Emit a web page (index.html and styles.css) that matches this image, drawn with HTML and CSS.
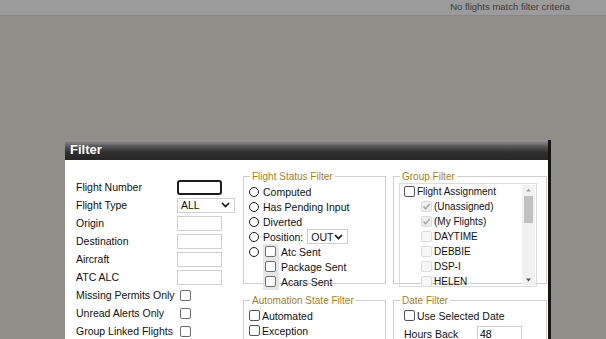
FILE: index.html
```html
<!DOCTYPE html>
<html lang="en">
<head>
    <meta charset="UTF-8">
    <meta name="viewport" content="width=device-width, initial-scale=1.0">
    <title>Flights</title>
    <link rel="stylesheet" href="styles.css">
</head>
<body>

<div class="topbar">
    <span class="status">No flights match filter criteria</span>
</div>

<div class="dialog">
    <div class="dialog-title">Filter</div>
    <div class="dialog-body">

        <div class="criteria">
            <label>Flight Number</label>
            <input type="text" class="txt focused">
            <label>Flight Type</label>
            <div class="fake-select wide"><span>ALL</span><svg width="9" height="6" viewBox="0 0 9 6"><path d="M1 1l3.5 3.5L8 1" fill="none" stroke="#111" stroke-width="1.6"/></svg></div>
            <label>Origin</label>
            <input type="text" class="txt">
            <label>Destination</label>
            <input type="text" class="txt">
            <label>Aircraft</label>
            <input type="text" class="txt">
            <label>ATC ALC</label>
            <input type="text" class="txt">
            <label>Missing Permits Only</label>
            <input type="checkbox" class="cb">
            <label>Unread Alerts Only</label>
            <input type="checkbox" class="cb">
            <label>Group Linked Flights</label>
            <input type="checkbox" class="cb">
        </div>

        <div class="middle">
            <fieldset class="box status-box">
                <legend>Flight Status Filter</legend>
                <div class="row"><input type="radio" name="st" class="rd">Computed</div>
                <div class="row"><input type="radio" name="st" class="rd">Has Pending Input</div>
                <div class="row"><input type="radio" name="st" class="rd">Diverted</div>
                <div class="row"><input type="radio" name="st" class="rd">Position:
                    <div class="fake-select pos"><span>OUT</span><svg width="9" height="6" viewBox="0 0 9 6"><path d="M1 1l3.5 3.5L8 1" fill="none" stroke="#111" stroke-width="1.6"/></svg></div>
                </div>
                <div class="sent">
                    <div class="sent-radio"><input type="radio" name="st" class="rd"></div>
                    <div class="sent-checks">
                        <div class="row"><input type="checkbox" class="cb"></div>
                        <div class="row"><input type="checkbox" class="cb"></div>
                        <div class="row"><input type="checkbox" class="cb"></div>
                    </div>
                    <div class="sent-labels">
                        <div class="row">Atc Sent</div>
                        <div class="row">Package Sent</div>
                        <div class="row">Acars Sent</div>
                    </div>
                </div>
            </fieldset>

            <fieldset class="box auto-box">
                <legend>Automation State Filter</legend>
                <div class="row"><input type="checkbox" class="cb sq">Automated</div>
                <div class="row"><input type="checkbox" class="cb sq">Exception</div>
            </fieldset>
        </div>

        <div class="right">
            <fieldset class="box group-box">
                <legend>Group Filter</legend>
                <div class="list">
                    <div class="list-items">
                        <div class="row"><input type="checkbox" class="cb sq">Flight Assignment</div>
                        <div class="row sub"><span class="cb-done"><svg width="11" height="11" viewBox="0 0 11 11"><path d="M2.5 5.5l2 2.2L8.7 3" fill="none" stroke="#a8a8a8" stroke-width="1.6"/></svg></span>(Unassigned)</div>
                        <div class="row sub"><span class="cb-done"><svg width="11" height="11" viewBox="0 0 11 11"><path d="M2.5 5.5l2 2.2L8.7 3" fill="none" stroke="#a8a8a8" stroke-width="1.6"/></svg></span>(My Flights)</div>
                        <div class="row sub"><input type="checkbox" class="cb off" disabled>DAYTIME</div>
                        <div class="row sub"><input type="checkbox" class="cb off" disabled>DEBBIE</div>
                        <div class="row sub"><input type="checkbox" class="cb off" disabled>DSP-I</div>
                        <div class="row sub"><input type="checkbox" class="cb off" disabled>HELEN</div>
                    </div>
                    <div class="scrollbar">
                        <svg class="arrow" width="13" height="10" viewBox="0 0 13 10"><path d="M4 6.5h5L6.5 3.5z" fill="#a3a3a3"/></svg>
                        <div class="thumb"></div>
                        <div class="track"></div>
                        <svg class="arrow" width="13" height="10" viewBox="0 0 13 10"><path d="M4 3.5h5L6.5 6.5z" fill="#505050"/></svg>
                    </div>
                </div>
            </fieldset>

            <fieldset class="box date-box">
                <legend>Date Filter</legend>
                <div class="date-rows">
                    <div class="row"><input type="checkbox" class="cb sq">Use Selected Date</div>
                    <div class="row hours"><span class="hours-label">Hours Back</span><input type="text" class="txt num" value="48"></div>
                </div>
            </fieldset>
        </div>

    </div>
</div>

</body>
</html>
```

FILE: styles.css
```css
body {
    margin: 0;
    height: 339px;
    overflow: hidden;
    background-color: #8f8e88;
    font-family: "Liberation Sans", Arial, sans-serif;
    font-size: 10.5px;
    color: #111;
}
.topbar {
    height: 15px;
    background: #9b9b9b;
    border-bottom: 1px solid #878787;
    display: flex;
    justify-content: flex-end;
    padding-right: 36px;
}
.status {
    font-size: 9.5px;
    line-height: 13px;
    color: #3b3b3b;
}
.dialog {
    position: absolute;
    left: 65px;
    top: 140px;
    width: 483px;
    height: 199px;
    overflow: hidden;
    background: white;
    border-right: 3px solid #151515;
}
.dialog-title {
    height: 20px;
    line-height: 20px;
    padding-left: 5px;
    font-size: 13px;
    font-weight: bold;
    color: white;
    background: linear-gradient(#9a9a9a, #5a5a5a 30%, #303030 60%, #262626);
}
.dialog-body {
    display: flex;
    padding: 10px 0 0 11px;
}
.criteria {
    width: 167px;
    padding-top: 8px;
    display: grid;
    grid-template-columns: 101px 1fr;
    grid-auto-rows: 18px;
    align-items: center;
    align-content: start;
}
.txt {
    box-sizing: border-box;
    width: 45px;
    height: 15px;
    margin: 0;
    padding: 0 3px;
    border: 1px solid #d0d0d0;
    font-family: inherit;
    font-size: 10.5px;
}
.txt.focused {
    border: 2px solid #1d1d1d;
    border-radius: 3px;
}
.fake-select {
    box-sizing: border-box;
    height: 15px;
    border: 1px solid #d0d0d0;
    display: flex;
    align-items: center;
    justify-content: space-between;
    padding: 0 4px 0 3px;
}
.fake-select.wide {
    width: 58px;
}
.fake-select.pos {
    width: 41px;
    margin-left: 4px;
}
.cb {
    appearance: none;
    box-sizing: border-box;
    width: 11px;
    height: 11px;
    margin: 0 0 0 3px;
    border: 1px solid #6e6e6e;
    border-radius: 2px;
    background: white;
}
.cb.sq {
    margin: 0 2px 0 0;
    border-color: #555;
}
.cb.off {
    border-color: #dcdcdc;
    background: #f6f6f6;
    margin: 0 2px 0 0;
}
.cb-done {
    box-sizing: border-box;
    width: 11px;
    height: 11px;
    margin-right: 2px;
    border: 1px solid #dcdcdc;
    border-radius: 2px;
    background: #eeeeee;
    display: flex;
}
.cb-done svg {
    margin: -1px;
}
.rd {
    appearance: none;
    box-sizing: border-box;
    width: 10px;
    height: 10px;
    margin: 0 4px 0 0;
    border: 1px solid #1a1a1a;
    border-radius: 50%;
}
.middle {
    width: 143px;
}
.right {
    width: 154px;
    margin-left: 7px;
}
.box {
    margin: 0;
    padding: 0 4px 0 5px;
    border: 1px solid #cfcfcf;
}
.box legend {
    padding: 0 2px;
    margin-left: 1px;
    font-size: 10px;
    line-height: 13px;
    color: #a8801f;
}
.row {
    height: 15px;
    display: flex;
    align-items: center;
    white-space: nowrap;
}
.status-box {
    height: 114px;
    box-sizing: border-box;
    padding-top: 1px;
}
.sent {
    display: flex;
}
.sent-radio {
    width: 14px;
    height: 15px;
    display: flex;
    align-items: center;
}
.sent-checks {
    width: 16px;
    height: 46px;
    background: #e6e6e6;
}
.sent-checks .cb {
    margin-left: 2px;
}
.sent-labels {
    padding-left: 2px;
}
.auto-box {
    margin-top: 10px;
    padding-top: 1px;
    padding-left: 5px;
    height: 60px;
}
.group-box {
    height: 114px;
    box-sizing: border-box;
    padding: 0 9px 0 5px;
}
.list {
    height: 104px;
    box-sizing: border-box;
    border: 1px solid #dcdcdc;
    display: flex;
    font-size: 10px;
}
.list-items {
    flex: 1;
    padding-left: 4px;
}
.list-items .sub {
    padding-left: 17px;
}
.scrollbar {
    width: 13px;
    margin: 1px 1px 1px 0;
    background: #f1f1f1;
    display: flex;
    flex-direction: column;
}
.thumb {
    height: 27px;
    margin: 1px 2px;
    background: #c1c1c1;
}
.track {
    flex: 1;
}
.date-box {
    margin-top: 10px;
    padding: 1px 4px 0 5px;
    height: 60px;
}
.date-rows {
    padding-left: 5px;
}
.hours {
    height: 18px;
    margin-top: 2px;
}
.hours-label {
    width: 73px;
}
.txt.num {
    height: 16px;
    padding-left: 2px;
}
```
